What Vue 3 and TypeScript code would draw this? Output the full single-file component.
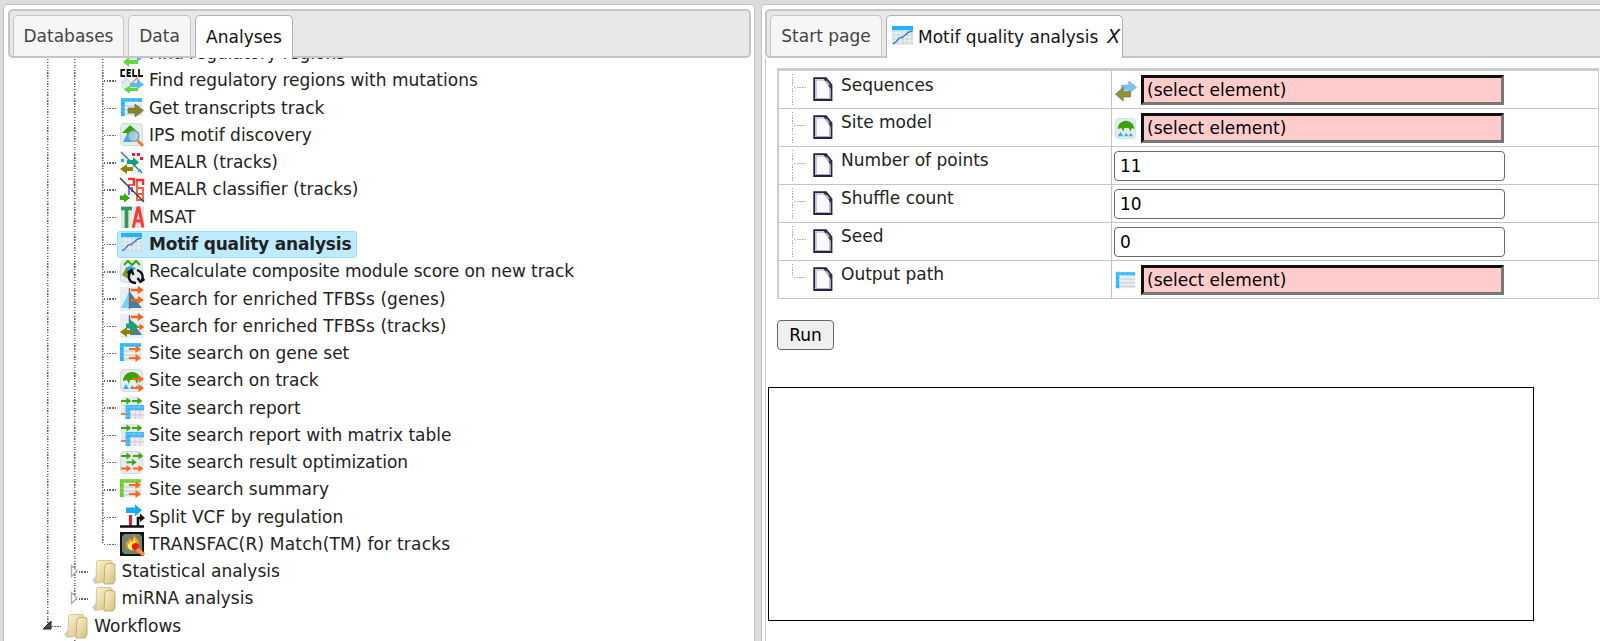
<script setup lang="ts">
import { ref } from 'vue'

interface TreeNode { label: string; icon: string; level: number; last?: boolean; toggle?: 'closed' | 'open' }
interface Field { label: string; icon?: string; value: string; select: boolean }

const frame = '<rect x=".5" y=".5" width="22" height="22" rx="4" fill="#e4ecec" stroke="#d0dbdd"/>'
const grid = (c: string) => `<rect x="1" y="2" width="21" height="18" fill="#e9efef"/><path d="M5 10h17M5 14h17M5 18h17" stroke="#cbd6d6" stroke-width="1.4"/><path d="M1 4h21M2.8 2v18" stroke="${c}" stroke-width="3.8" fill="none"/><path d="M1 5.500h21M1 2.8h21M6 3v4M11 3v4M16 3v4M1 11h4M1 15h4" stroke="#fff" stroke-opacity=".3" stroke-width=".8"/>`
const arrow = (x: number, y: number, c: string, s = 1) => `<path transform="translate(${x} ${y}) scale(${s})" d="M0-1.100h6.500v-3L12 0 6.500 4.100V1.100H0z" fill="${c}"/>`
const tree = '<path d="M3 12c0-5 4-9 9-9s9 4 9 9l-3-1-1 4-2-4h-5l-1 4-2-4z" fill="#39a409"/><path d="M3 20l3-5 3 5zM10 20l2-4 3 4zM15 20l2-4 3 4z" fill="#35aef5"/>'
const report = '<rect x="1" y="1" width="21" height="19" rx="4" fill="#e2e9e9"/>' + arrow(1, 5, '#3aa611', .85) + arrow(12, 5, '#3aa611', .85) + '<path d="M1 18h6" stroke="#ff641c" stroke-width="1.700"/><rect x="6" y="9" width="18" height="14" fill="#efe9f2"/><path d="M6 11.500h18M8 9v14" stroke="#3bb5fb" stroke-width="4.800"/><path d="M10.500 14.500h13.500M10.500 19h13.500M15 14v9M20 14v9" stroke="#c8c5d2" stroke-width=".8"/><path d="M6 11h18M14 9v5M19 9v5M6 16h4M6 20h4" stroke="#8bd5ff" stroke-width=".7"/>'

const icons: Record<string, string> = {
  regions: '<path d="M1 13l5-4 6 5 5-7 5 8" fill="#e9f0f0" stroke="#8fcdec"/>' + arrow(9, 15, '#48b8f5', 1.2) + '<path d="M18 18h-9v-3l-6 5 6 5v-3h9z" fill="#61dc35"/>',
  cell: '<path d="M1 19V11l5-2 5 4 6-3 5 6-7 5z" fill="#e2eaea"/><path d="M2 14l5-4 6 6" stroke="#9cdcf5" fill="none"/><path d="M10 16l7-7 4 6" stroke="#f07b71" stroke-width="1.200" fill="none"/><path d="M10 14h7v-3.500l7 5-7 5V18h-7z" fill="#50bdf8"/><path d="M18 19H10v-2.500l-6.500 4 6.500 4V22h8z" fill="#5bdb31"/><path d="M5 1H1.300v6H5M11 1H7.500v6H11M7.500 4h3M13.200 0v7h4M19 0v7h4" fill="none" stroke="#141414" stroke-width="1.800"/>',
  transcripts: grid('#2bb3fb') + '<path d="M8 12h7V8l8.500 6.500L15 21v-4H8z" fill="#858330" stroke="#68702f" stroke-width=".6"/>',
  ips: frame + '<path d="M2 10l8-8 9 8h-4v6H7v-6z" fill="#38a30c"/><path d="M3 19l4-8 5 8z" fill="#36aef2"/><circle cx="13.500" cy="13" r="5.300" fill="#a5d4f0" fill-opacity=".9" stroke="#8b9da6" stroke-width="1.500"/><path d="M17.500 17.500l5.500 5.500" stroke="#e6802c" stroke-width="3"/>',
  mealr: '<rect width="24" height="24" fill="#f3f6f6"/><path d="M1 1l21 21" stroke="#59605f" stroke-width="1.200"/><path d="M12 2h3v3h-3zM17 2h3v3h-3zM20 6h3v3h-3z" fill="#f01c29"/><path d="M1 8h3v3H1zM5 5h2v2H5zM18 18h3v3h-3z" fill="#23a9f5"/><path d="M7 9h6V6l6 5.500L13 16v-3H7z" fill="#109e86"/><path d="M13 16H7v-3l-7 5 7 5v-3h6z" fill="#8d8300"/>',
  classifier: '<path d="M8 1h6v6H8M16 2h7M17 3v20M17 10h6v12h-6M17 16h6" fill="none" stroke="#ff6245" stroke-width="2"/><path d="M8 1h6v6M16 2h7v5" fill="none" stroke="#fa2b31" stroke-width="2.500"/><path d="M9 7v10M12 9v5" stroke="#774cff" stroke-width="1.700"/><path d="M0 17.500h4V15l6 5-6 4.500V22H0z" fill="#39a70e"/><path d="M0 0l24 24" stroke="#333b45" stroke-width="1.400"/>',
  msat: '<path d="M1 1h11v22H1zM13 1h11v22H13z" fill="#dfe6e4"/><path d="M1 3.500h11M6.500 2v21" stroke="#319a59" stroke-width="3.700"/><path d="M13.200 22.500L17.800 3h1L23 22.500M15 16h7" fill="none" stroke="#ff3635" stroke-width="3"/>',
  motif: '<rect x="1" y="1" width="21" height="18.500" fill="#d0dbdd"/><path d="M1 8h21M1 12h21M1 16h21M5 5v14M9.500 5v14M14 5v14M18.500 5v14" stroke="#f0f6f6" stroke-width=".9"/><path d="M1 3h21" stroke="#24b4fc" stroke-width="4.200"/><path d="M2 18.500c5-1 4-6 8-6 5 0 3-5.500 11.500-6.500" fill="none" stroke="#367be8" stroke-width="1.500"/>',
  recalculate: frame + '<path d="M4 5l4-4 4 4 4-4 4 4" fill="none" stroke="#38a810" stroke-width="2"/><path d="M2 15l4-7h4v12z" fill="#819342"/><path d="M5 8l5-2 6 2-4 4z" fill="#28a7e8"/><path d="M16 23c-7 0-9-6-5-12M7.500 13l4-3 2 5M17 10c6 2 7 7 4 12M24.500 19l-4 3-3-4" fill="none" stroke="#111" stroke-width="2.300"/>',
  enrichedGenes: '<rect width="24" height="24" fill="#e9eff0"/><path d="M1 21L9 5v16z" fill="#7bd1fa"/><path d="M10 5l12 16H10z" fill="#477e9c"/><path d="M9.500 1v21" stroke="#647078" stroke-width="1.400"/>' + arrow(11, 3, '#ff6215', 1.05) + arrow(11, 13, '#ff6215', 1.05),
  enrichedTracks: '<rect width="24" height="24" fill="#e9eff0"/><path d="M10 5l12 16H10z" fill="#477e9c"/><path d="M9.500 1v13" stroke="#647078" stroke-width="1.400"/>' + arrow(11, 3, '#ff6215', 1.05) + arrow(14, 13, '#ff6215', .85) + '<path d="M6 9.500h6V7l6 5-6 5v-2.500H6z" fill="#11a878"/><path d="M13 16H7v-3l-7 5 7 5v-3h6z" fill="#898200"/>',
  siteGene: '<g transform="translate(-1 -1)">' + grid('#25b5fd') + '</g>' + arrow(9, 7, '#ff6819') + arrow(9, 16, '#ff6819'),
  siteTrack: frame + tree + arrow(12, 10, '#ff6819') + arrow(12, 19, '#ff6819'),
  report,
  optimize: frame + arrow(1, 5, '#3aa611', .85) + arrow(13, 5, '#3aa611', .85) + arrow(6.5, 11.3, '#3aa611', .85) + arrow(1, 17.5, '#ff641c', .85) + arrow(13, 17.5, '#ff641c', .85),
  summary: '<g transform="translate(-1 -1)">' + grid('#67cf2a') + '</g>' + arrow(9, 7, '#ff6819') + arrow(9, 16, '#ff6819'),
  split: '<path d="M6 2.500h9V-.7l7 6-7 6V8H6z" fill="#1aaaf4"/><path d="M10.500 10v11" stroke="#ef1432" stroke-width="3"/><path d="M0 21.500h24M18 21v-8h4" stroke="#111" stroke-width="2.600" fill="none"/><path d="M20 8.500l5 4.500-5 4z" fill="#111"/>',
  match: '<rect width="24" height="24" fill="#101410"/><rect x="2" y="2" width="20" height="20" rx="4" fill="#748371"/><path d="M13 1c2 5 7 6 6 12-1 7-12 8-13 0 0-4 3-4 4-7 1 1 2 2 2 3 2-3 2-5 1-8z" fill="#ff9a09"/><path d="M13 4c1 4 4 5 3 10-1 5-8 5-8 0 0-3 2-3 3-5 1 1 1 1 1 2 2-2 2-4 1-7z" fill="#fff37a"/><circle cx="15.500" cy="14.500" r="3.600" fill="#ef1b10"/><path d="M17 17l7 6" stroke="#fd912f" stroke-width="4"/>',
  folder: '<path d="M-1 20l4-4v8H2z" fill="#aaa798" opacity=".55"/><path d="M3.500 1.500L5 .5h13l1 1V20L6 23H3z" fill="url(#sand)" stroke="#c7b475" stroke-width=".7"/><path d="M12 5.500l3-2h4l3 1V21l-2 3h-9z" fill="url(#sand)" stroke="#b9a360" stroke-width=".8"/>',
  sequence: '<path d="M7 5.500h8V1l8.500 7-8.500 7v-4H7z" fill="#7cc3f2" stroke="#75a9c9" stroke-width=".7"/><path d="M17 12.500H9V8L.5 15.500 9 23v-4.500h8z" fill="#929139" stroke="#71723c" stroke-width=".7"/>',
  model: frame + tree,
  table: grid('#2db7fc'),
  page: '<path d="M1.200 1.200H13L18.500 8v15H1.200z" fill="#fbfbff" stroke="#252535" stroke-width="1.800"/><path d="M3 21.500V3h8M16.800 10v11.500H3" fill="none" stroke="#a8a9dc" stroke-width="1.200"/><path d="M10.500 2H13l5.500 7v4z" fill="#393746"/><path d="M13 4l3 4" stroke="#b9b6cb" stroke-width="1.800"/>',
}

const nodes: TreeNode[] = [
  { label: 'Find regulatory regions', icon: 'regions', level: 2 },
  { label: 'Find regulatory regions with mutations', icon: 'cell', level: 2 },
  { label: 'Get transcripts track', icon: 'transcripts', level: 2 },
  { label: 'IPS motif discovery', icon: 'ips', level: 2 },
  { label: 'MEALR (tracks)', icon: 'mealr', level: 2 },
  { label: 'MEALR classifier (tracks)', icon: 'classifier', level: 2 },
  { label: 'MSAT', icon: 'msat', level: 2 },
  { label: 'Motif quality analysis', icon: 'motif', level: 2 },
  { label: 'Recalculate composite module score on new track', icon: 'recalculate', level: 2 },
  { label: 'Search for enriched TFBSs (genes)', icon: 'enrichedGenes', level: 2 },
  { label: 'Search for enriched TFBSs (tracks)', icon: 'enrichedTracks', level: 2 },
  { label: 'Site search on gene set', icon: 'siteGene', level: 2 },
  { label: 'Site search on track', icon: 'siteTrack', level: 2 },
  { label: 'Site search report', icon: 'report', level: 2 },
  { label: 'Site search report with matrix table', icon: 'report', level: 2 },
  { label: 'Site search result optimization', icon: 'optimize', level: 2 },
  { label: 'Site search summary', icon: 'summary', level: 2 },
  { label: 'Split VCF by regulation', icon: 'split', level: 2 },
  { label: 'TRANSFAC(R) Match(TM) for tracks', icon: 'match', level: 2, last: true },
  { label: 'Statistical analysis', icon: 'folder', level: 1, toggle: 'closed' },
  { label: 'miRNA analysis', icon: 'folder', level: 1, toggle: 'closed', last: true },
  { label: 'Workflows', icon: 'folder', level: 0, toggle: 'open', last: true },
]

const fields = ref<Field[]>([
  { label: 'Sequences', icon: 'sequence', value: '(select element)', select: true },
  { label: 'Site model', icon: 'model', value: '(select element)', select: true },
  { label: 'Number of points', value: '11', select: false },
  { label: 'Shuffle count', value: '10', select: false },
  { label: 'Seed', value: '0', select: false },
  { label: 'Output path', icon: 'table', value: '(select element)', select: true },
])

const selected = ref('Motif quality analysis')
const leftTabs = ['Databases', 'Data', 'Analyses']
const activeTab = ref('Analyses')

function spacing(label: string): string | undefined {
  if (label.startsWith('TRANSFAC')) return 'wide'
  if (label.startsWith('Recalculate')) return 'narrow'
  return label.includes('TFBSs') ? 'roomy' : undefined
}
</script>

<template>
  <div class="app">
    <svg class="defs" width="0" height="0"><defs><linearGradient id="sand" x2="1" y2="1"><stop stop-color="#fbf3cf" /><stop offset="1" stop-color="#d3bf7d" /></linearGradient></defs></svg>
    <section class="panel left">
      <nav class="tabs">
        <button v-for="t in leftTabs" :key="t" class="tab" :class="[t.toLowerCase(), { active: t === activeTab }]" @click="activeTab = t">{{ t }}</button>
      </nav>
      <div class="tree">
        <div class="rows">
          <div v-for="n in nodes" :key="n.label" class="row">
            <span v-for="g in n.level" :key="g" class="guide" />
            <span class="joint" :class="{ last: n.last }">
              <svg v-if="n.toggle" class="toggle" viewBox="0 0 10 14">
                <path v-if="n.toggle === 'closed'" d="M1.500 1.500v11L7 7z" fill="#fff" stroke="#aaa" stroke-width="1.300" />
                <path v-else d="M0 10L8 2v8z" fill="#444" stroke="#222" />
              </svg>
            </span>
            <a class="node" :class="{ selected: n.label === selected }" @click="selected = n.label">
              <svg class="icon" viewBox="0 0 24 24" v-html="icons[n.icon]" />
              <span :class="spacing(n.label)">{{ n.label }}</span>
            </a>
          </div>
          <div class="row">
            <span class="guide blank" /><span class="joint" />
            <a class="node"><svg class="icon" viewBox="0 0 24 24" v-html="icons.folder" /></a>
          </div>
        </div>
      </div>
    </section>

    <section class="panel right">
      <nav class="tabs">
        <button class="tab start">Start page</button>
        <button class="tab document active">
          <svg class="icon" viewBox="0 0 24 24" v-html="icons.motif" />
          <span>Motif quality analysis</span><i>X</i>
        </button>
      </nav>
      <div class="content">
        <div class="grid">
          <div v-for="(f, i) in fields" :key="f.label" class="field">
            <div class="name">
              <span class="branch" :class="{ end: i === fields.length - 1 }" />
              <svg class="page" viewBox="0 0 20 24" v-html="icons.page" />
              <label>{{ f.label }}</label>
            </div>
            <div class="value">
              <svg v-if="f.icon" class="kind" viewBox="0 0 24 24" v-html="icons[f.icon]" />
              <input v-model="f.value" :class="{ select: f.select }" :readonly="f.select" />
            </div>
          </div>
        </div>
        <button class="run">Run</button>
        <div class="output" />
      </div>
    </section>
  </div>
</template>

<style>
body { margin: 0; overflow: hidden; }
</style>

<style scoped>
* { box-sizing: border-box; }
.app { display: flex; gap: 6px; width: 1600px; height: 641px; padding: 4px 0 0 3px; background: #dcdcdc; font: 17px/27px Verdana, "DejaVu Sans", sans-serif; color: #222; overflow: hidden; }
.defs { position: absolute; }
button, input { font: inherit; }
.panel { display: flex; flex-direction: column; height: 650px; background: #fff; border: 1px solid #c3c3c3; border-radius: 4px 4px 0 0; padding: 4px 3px 0 4px; }
.left { width: 752px; flex: none; }
.right { width: 860px; flex: none; padding-left: 3px; }
.tabs { display: flex; align-items: flex-start; flex: none; height: 49px; padding: 4px 3px 0; background: #e8e8e8; border: 2px solid #c5c5c5; border-radius: 5px; }
.tab { flex: none; height: 41px; padding: 0; border: 1px solid #c5c5c5; border-bottom: 0; border-radius: 5px 5px 0 0; background: #f6f6f6; color: #444; }
.tab.active { height: 43px; background: #fff; border-color: #b0b0b0; color: #111; }
.databases { width: 111px; margin-right: 4px; }
.data { width: 63px; margin-right: 4px; }
.analyses { width: 98px; }
.start { width: 112px; margin-right: 4px; }
.document { display: flex; align-items: center; width: 237px; padding: 0 0 0 4px; white-space: nowrap; }
.document span { margin-left: 3px; }
.document i { margin-left: 9px; font-size: 19px; transform: translateY(-1px); }
.icon { flex: none; width: 24px; height: 24px; overflow: visible; }
.tree { flex: 1; overflow: hidden; margin-left: -4px; }
.rows { margin-top: -18px; padding-left: 43px; }
.row { display: flex; height: 27.270px; }
.guide, .joint { flex: none; background: repeating-linear-gradient(#666 0 1.400px, transparent 1.400px 2.727px) 0 0 / 1.500px 100% no-repeat; }
.guide { width: 27.300px; }
.guide.blank { background: none; }
.joint { position: relative; width: 15px; }
.joint.last { background-size: 1.500px 50%; }
.joint::after { content: ''; position: absolute; left: 2px; top: 13px; width: 12px; height: 1.500px; background: repeating-linear-gradient(90deg, #666 0 1.400px, transparent 1.400px 2.727px); }
.toggle { position: absolute; left: -4px; top: 6px; width: 10px; height: 14px; z-index: 1; }
.node { display: flex; align-items: center; height: 27.270px; padding: 0 5px 0 2.300px; border: 1px solid transparent; border-radius: 3px; white-space: nowrap; }
.node span { margin-left: 5px; }
.node .wide { letter-spacing: .2px; }
.node .narrow { letter-spacing: -.06px; }
.node .roomy { letter-spacing: .1px; }
.node.selected { background: #beebff; border-color: #99defd; font-weight: bold; letter-spacing: -.18px; }
.content { flex: 1; border-left: 1px solid #c8c8c8; padding: 10px 0 0 11px; }
.grid { width: 822px; border: solid #ccc; border-width: 3px 1px 0 2px; }
.field { display: flex; height: 37.930px; border-bottom: 1px solid #c4c4c4; }
.name { display: flex; width: 333px; border-right: 1px solid #c4c4c4; padding-left: 13px; }
.branch { position: relative; width: 15px; height: 32px; margin-top: 3px; background: repeating-linear-gradient(#aaa 0 1.400px, transparent 1.400px 2.727px) 0 0 / 1.300px 100% no-repeat; }
.branch.end { background-size: 1.300px 14px; }
.branch::after { content: ''; position: absolute; left: 2px; top: 13px; width: 12px; height: 1.300px; background: repeating-linear-gradient(90deg, #aaa 0 1.400px, transparent 1.400px 2.727px); }
.page { width: 20px; height: 24px; margin: 6px 0 0 6px; }
.name label { margin: .5px 0 0 8px; white-space: nowrap; }
.value { display: flex; padding: 4px 0 0 2px; }
.kind { width: 22px; height: 22px; margin: 5px 4px 0 1px; overflow: visible; }
input { width: 391px; height: 30px; padding: 0 5px; border: 1px solid #686868; border-radius: 4px; background: #fff; color: #000; outline: none; }
input.select { width: 363px; padding: 0 3px; border: 3px solid; border-color: #111 #777 #777 #111; border-radius: 0; background: #ffcbcb; }
.run { display: block; width: 57px; height: 30px; margin-top: 21px; padding: 0; border: 1px solid #666; border-radius: 4px; background: #efefef; color: #000; line-height: 28px; }
.output { width: 766px; height: 234px; margin: 37px 0 0 -9px; border: 1px solid #000; }
</style>
